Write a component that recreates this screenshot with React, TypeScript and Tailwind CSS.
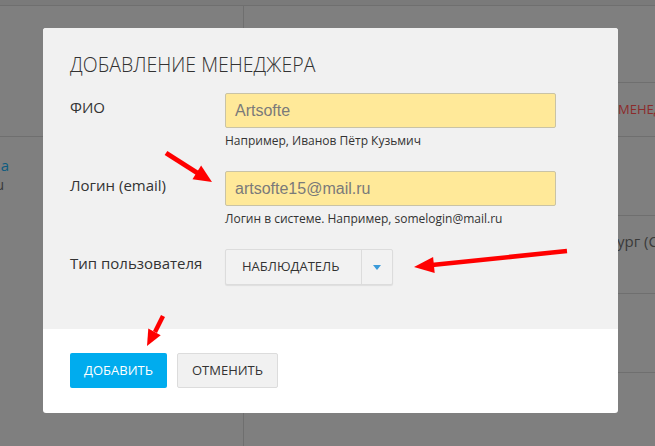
import React from 'react'

const sans = { fontFamily: '"Open Sans", "Noto Sans", sans-serif' }

function Field({
  label,
  value,
  hint,
}: {
  label: string
  value: string
  hint: string
}) {
  return (
    <div className="flex items-start">
      <div className="w-[155px] shrink-0 mt-[4px] text-[15px] leading-[20px] text-[#333]">{label}</div>
      <div className="flex flex-col">
        <div className="w-[331px] h-[35px] rounded-[2px] border border-[#c9c3a6] bg-[#ffe999] px-[9px] flex items-center">
          <span className="text-[16px] text-[#7a7a7a] font-['Liberation_Sans',Arial,sans-serif]">{value}</span>
        </div>
        <div className="mt-[5px] text-[12px] leading-[16px] text-[#333]">{hint}</div>
      </div>
    </div>
  )
}

export default function App() {
  return (
    <div className="relative h-[446px] w-[655px] overflow-hidden bg-[#7f7f7f]" style={sans}>
      {/* page behind the overlay */}
      <div className="h-[6px] border-b border-[#6f6f6f] bg-[#7a7a7a]" />
      <div className="flex h-[440px]">
        <div className="w-[244px] shrink-0 border-r border-[#6f6f6f]">
          <div className="h-[131px] border-b border-[#6f6f6f]" />
          <div className="flex w-[9px] justify-end whitespace-nowrap pt-[18px] text-[15px] leading-[20px] text-[#0d5c80]">
            Управление клиентами раздела
          </div>
          <div className="flex w-[4px] justify-end whitespace-nowrap text-[14px] leading-[20px] text-[#3a3a3a]">
            testclient@mail.ru
          </div>
        </div>
        <div className="min-w-0 flex-1 overflow-hidden">
          <div className="h-[77px] border-b border-[#6f6f6f]" />
          <div className="flex h-[54px] items-center whitespace-nowrap border-b border-[#6f6f6f] pl-[374px] text-[13px] text-[#8c2b2b]">
            МЕНЕДЖЕР
          </div>
          <div className="h-[79px] border-b border-[#6f6f6f]" />
          <div className="h-[78px] whitespace-nowrap border-b border-[#6f6f6f] pl-[373px] pt-[14px] text-[15px] text-[#3a3a3a]">
            ург (СПб)
          </div>
          <div className="h-[79px] border-b border-[#6f6f6f]" />
        </div>
      </div>

      {/* modal */}
      <div className="absolute left-[43px] top-[28px] w-[575px] overflow-hidden rounded-[3px] bg-white">
        <div className="bg-[#f1f1f1] px-[27px] pt-[23px] pb-[44px]">
          <h2 className="text-[19.5px] leading-[28px] text-[#333] font-light">ДОБАВЛЕНИЕ МЕНЕДЖЕРА</h2>
          <div className="mt-[14px] flex flex-col gap-[22px]">
            <Field label="ФИО" value="Artsofte" hint="Например, Иванов Пётр Кузьмич" />
            <Field label="Логин (email)" value="artsofte15@mail.ru" hint="Логин в системе. Например, somelogin@mail.ru" />
            <div className="flex items-start">
              <div className="w-[155px] shrink-0 mt-[4px] text-[15px] leading-[20px] text-[#333]">Тип пользователя</div>
              <div className="flex h-[36px] w-[168px] rounded-[2px] border border-[#dcdcdc] bg-[#f2f2f2] shadow-[0_1px_1px_rgba(0,0,0,0.08)]">
                <div className="flex flex-1 items-center pl-[16px] text-[13px] text-[#333]">НАБЛЮДАТЕЛЬ</div>
                <div className="flex w-[31px] items-center justify-center border-l border-[#dcdcdc]">
                  <svg width="8" height="5" viewBox="0 0 8 5">
                    <path d="M0 0h8L4 5z" fill="#3a9ad9" />
                  </svg>
                </div>
              </div>
            </div>
          </div>
        </div>
        <div className="flex gap-[10px] px-[27px] pt-[24px] pb-[25px]">
          <button className="h-[35px] w-[97px] rounded-[2px] bg-[#00acee] text-[13px] text-white">ДОБАВИТЬ</button>
          <button className="h-[35px] w-[101px] rounded-[2px] border border-[#dcdcdc] bg-[#f1f1f1] text-[13px] text-[#333]">ОТМЕНИТЬ</button>
        </div>
      </div>

      {/* annotation arrows */}
      <svg className="pointer-events-none absolute inset-0" width="655" height="446">
        <line x1="166" y1="153" x2="199" y2="174" stroke="#ff0000" strokeWidth="5" />
        <polygon points="212,182 192.5,179.2 201.1,165.6" fill="#ff0000" />
        <line x1="567" y1="251" x2="432" y2="265" stroke="#ff0000" strokeWidth="4.5" />
        <polygon points="414,267 433.1,256.9 434.7,272.9" fill="#ff0000" />
        <line x1="163" y1="316" x2="155" y2="332" stroke="#ff0000" strokeWidth="4.5" />
        <polygon points="147,346 148.3,328.6 160.7,335.2" fill="#ff0000" />
      </svg>
    </div>
  )
}
